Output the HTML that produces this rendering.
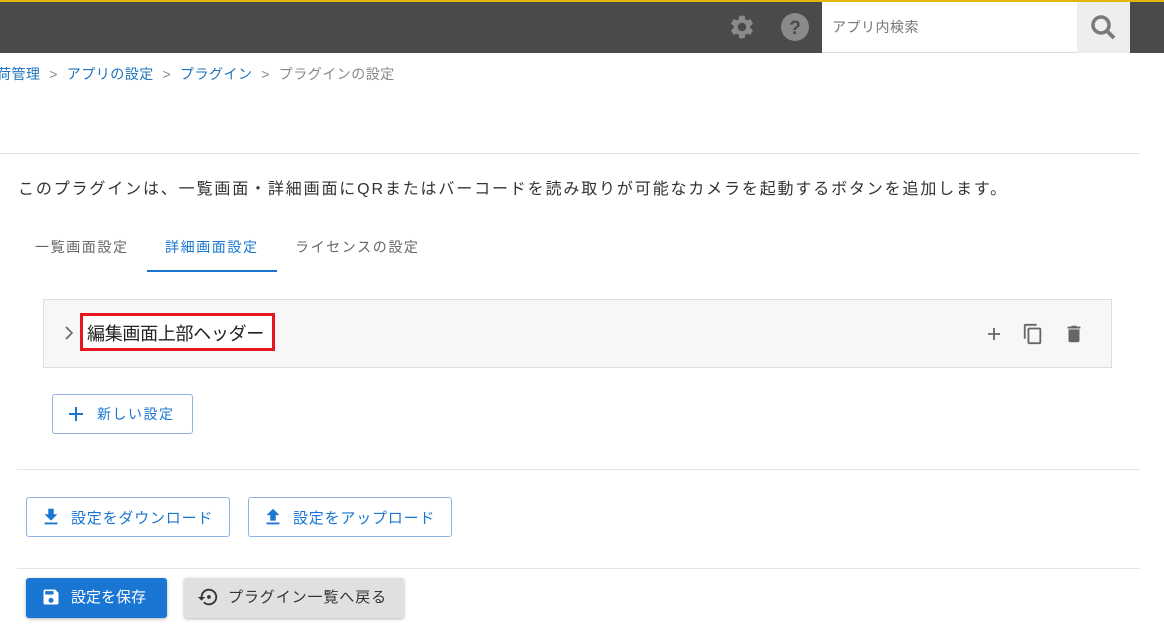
<!DOCTYPE html>
<html><head><meta charset="utf-8"><style>
*{box-sizing:border-box;margin:0;padding:0}
body{width:1164px;height:642px;background:#fff;font-family:"Liberation Sans","Noto Sans CJK JP",sans-serif;position:relative;overflow:hidden;color:#333}
.abs{position:absolute}
.hdr{left:0;top:0;width:1164px;height:53px;background:#4a4a4a;border-top:2px solid #e5b50f}
.btn{position:absolute;border:1px solid #8fb4e3;border-radius:3px;color:#1976d2;font-size:15px;display:flex;align-items:center;background:#fff;white-space:nowrap}
.line{position:absolute;height:1px;background:#e3e3e3}
</style></head><body>
<div class="abs hdr"></div>
<svg class="abs" style="left:728px;top:13px" width="28" height="28" viewBox="0 0 24 24"><path fill="#8a8a8a" d="M19.14 12.94c.04-.3.06-.61.06-.94s-.02-.64-.07-.94l2.030-1.58a.49.49 0 00.12-.61l-1.920-3.32a.49.49 0 00-.59-.22l-2.39.96c-.5-.38-1.03-.7-1.62-.94l-.36-2.54a.48.48 0 00-.48-.41h-3.84c-.24 0-.43.17-.47.41l-.36 2.54c-.59.24-1.13.57-1.62.94l-2.39-.96a.48.48 0 00-.59.22L2.74 8.87c-.12.21-.08.47.12.61l2.03 1.58c-.05.3-.09.63-.09.94s.02.64.07.94l-2.03 1.58a.49.49 0 00-.12.61l1.92 3.32c.12.22.37.29.59.22l2.39-.96c.5.38 1.03.7 1.62.94l.36 2.54c.05.24.24.41.48.41h3.84c.24 0 .44-.17.47-.41l.36-2.54c.59-.24 1.13-.56 1.62-.94l2.39.96c.22.08.47 0 .59-.22l1.92-3.32c.12-.22.07-.47-.12-.61l-2.01-1.58zM12 15.6A3.6 3.6 0 1112 8.4a3.6 3.6 0 010 7.2z"/></svg>
<svg class="abs" style="left:781px;top:13px" width="28" height="28" viewBox="0 0 28 28"><circle cx="14" cy="14" r="14" fill="#8a8a8a"/><text x="14" y="21" text-anchor="middle" font-size="19" font-weight="bold" fill="#4a4a4a" font-family="Liberation Sans">?</text></svg>
<div class="abs" style="left:822px;top:2px;width:255px;height:51px;background:#fff;border-bottom:1px solid #ddd;font-size:14px;color:#777;padding:15px 0 0 10px;letter-spacing:.5px">アプリ内検索</div>
<div class="abs" style="left:1077px;top:2px;width:53px;height:51px;background:#eee"></div>
<svg class="abs" style="left:1089px;top:13px" width="28" height="28" viewBox="0 0 28 28"><circle cx="12" cy="12" r="8" fill="none" stroke="#7a7a7a" stroke-width="3.5"/><path d="M18 18l7 7" stroke="#7a7a7a" stroke-width="4"/></svg>
<div class="abs" style="left:-3px;top:64px;font-size:14px;color:#888;white-space:nowrap;letter-spacing:.5px"><span style="color:#1e73be">荷管理</span>&nbsp; &gt; &nbsp;<span style="color:#1e73be">アプリの設定</span>&nbsp; &gt; &nbsp;<span style="color:#1e73be">プラグイン</span>&nbsp; &gt; &nbsp;プラグインの設定</div>
<div class="line" style="left:0;top:153px;width:1140px"></div>
<div class="abs" style="left:18px;top:175px;font-size:16px;color:#333;white-space:nowrap;letter-spacing:1.85px">このプラグインは、一覧画面・詳細画面にQRまたはバーコードを読み取りが可能なカメラを起動するボタンを追加します。</div>
<div class="abs" style="left:35px;top:237px;font-size:14px;color:#666;letter-spacing:1.6px">一覧画面設定</div>
<div class="abs" style="left:165px;top:237px;font-size:14px;color:#1976d2;letter-spacing:1.6px">詳細画面設定</div>
<div class="abs" style="left:147px;top:270px;width:130px;height:2px;background:#1976d2"></div>
<div class="abs" style="left:295px;top:237px;font-size:14px;color:#666;letter-spacing:1.6px">ライセンスの設定</div>
<div class="abs" style="left:43px;top:299px;width:1069px;height:69px;background:#f7f7f7;border:1px solid #ddd"></div>
<svg class="abs" style="left:63px;top:325px" width="12" height="16" viewBox="0 0 12 16"><path d="M3 2l6 6-6 6" fill="none" stroke="#666" stroke-width="1.6"/></svg>
<div class="abs" style="left:80px;top:313px;width:195px;height:38px;border:3px solid #e8171f;background:#fff;font-size:18px;color:#222;padding:4px 0 0 4px;white-space:nowrap;letter-spacing:-.3px">編集画面上部ヘッダー</div>
<svg class="abs" style="left:986px;top:326px" width="16" height="16"><path d="M8 2v12M2 8h12" stroke="#666" stroke-width="1.8"/></svg>
<svg class="abs" style="left:1022px;top:323px" width="22" height="22" viewBox="0 0 24 24"><path fill="#666" d="M16 1H4a2 2 0 00-2 2v14h2V3h12V1zm3 4H8a2 2 0 00-2 2v14a2 2 0 002 2h11a2 2 0 002-2V7a2 2 0 00-2-2zm0 16H8V7h11v14z"/></svg>
<svg class="abs" style="left:1063px;top:323px" width="22" height="22" viewBox="0 0 24 24"><path fill="#666" d="M6 19a2 2 0 002 2h8a2 2 0 002-2V7H6v12zM19 4h-3.5l-1-1h-5l-1 1H5v2h14V4z"/></svg>
<div class="btn" style="left:52px;top:394px;width:141px;height:40px;padding-left:15px;font-size:14px;letter-spacing:1.5px"><svg width="16" height="16" style="margin-right:13px"><path d="M8 1v14M1 8h14" stroke="#1976d2" stroke-width="2"/></svg>新しい設定</div>
<div class="line" style="left:17px;top:469px;width:1123px"></div>
<div class="btn" style="left:26px;top:497px;width:204px;height:40px;padding-left:13px;letter-spacing:.8px"><svg width="22" height="22" viewBox="0 0 24 24" style="margin-right:9px"><path fill="#1976d2" d="M19 9h-4V3H9v6H5l7 7 7-7zM5 18v2h14v-2H5z"/></svg>設定をダウンロード</div>
<div class="btn" style="left:248px;top:497px;width:204px;height:40px;padding-left:13px;letter-spacing:.8px"><svg width="22" height="22" viewBox="0 0 24 24" style="margin-right:9px"><path fill="#1976d2" d="M9 16h6v-6h4l-7-7-7 7h4zm-4 2h14v2H5z"/></svg>設定をアップロード</div>
<div class="line" style="left:17px;top:568px;width:1123px"></div>
<div class="abs" style="left:26px;top:578px;width:141px;height:40px;background:#1976d2;border-radius:3px;box-shadow:0 1px 3px rgba(0,0,0,.3);color:#fff;font-size:15px;display:flex;align-items:center;padding-left:15px;padding-bottom:3px"><svg width="20" height="20" viewBox="0 0 24 24" style="margin-right:10px"><path fill="#fff" d="M17 3H5a2 2 0 00-2 2v14a2 2 0 002 2h14a2 2 0 002-2V7l-4-4zm-5 16a3 3 0 110-6 3 3 0 010 6zm3-10H5V5h10v4z"/></svg>設定を保存</div>
<div class="abs" style="left:184px;top:578px;width:220px;height:40px;background:#e0e0e0;border-radius:3px;box-shadow:0 1px 3px rgba(0,0,0,.3);color:#333;font-size:15px;display:flex;align-items:center;padding-left:13px;padding-bottom:3px;letter-spacing:.9px;white-space:nowrap"><svg width="22" height="22" viewBox="0 0 24 24" style="margin-right:9px"><path fill="#333" d="M13 3a9 9 0 00-9 9H1l4 4 4-4H6a7 7 0 117 7 7 7 0 01-4.9-2l-1.4 1.4A9 9 0 1013 3zm0 7a2 2 0 100 4 2 2 0 000-4z"/></svg>プラグイン一覧へ戻る</div>
</body></html>
